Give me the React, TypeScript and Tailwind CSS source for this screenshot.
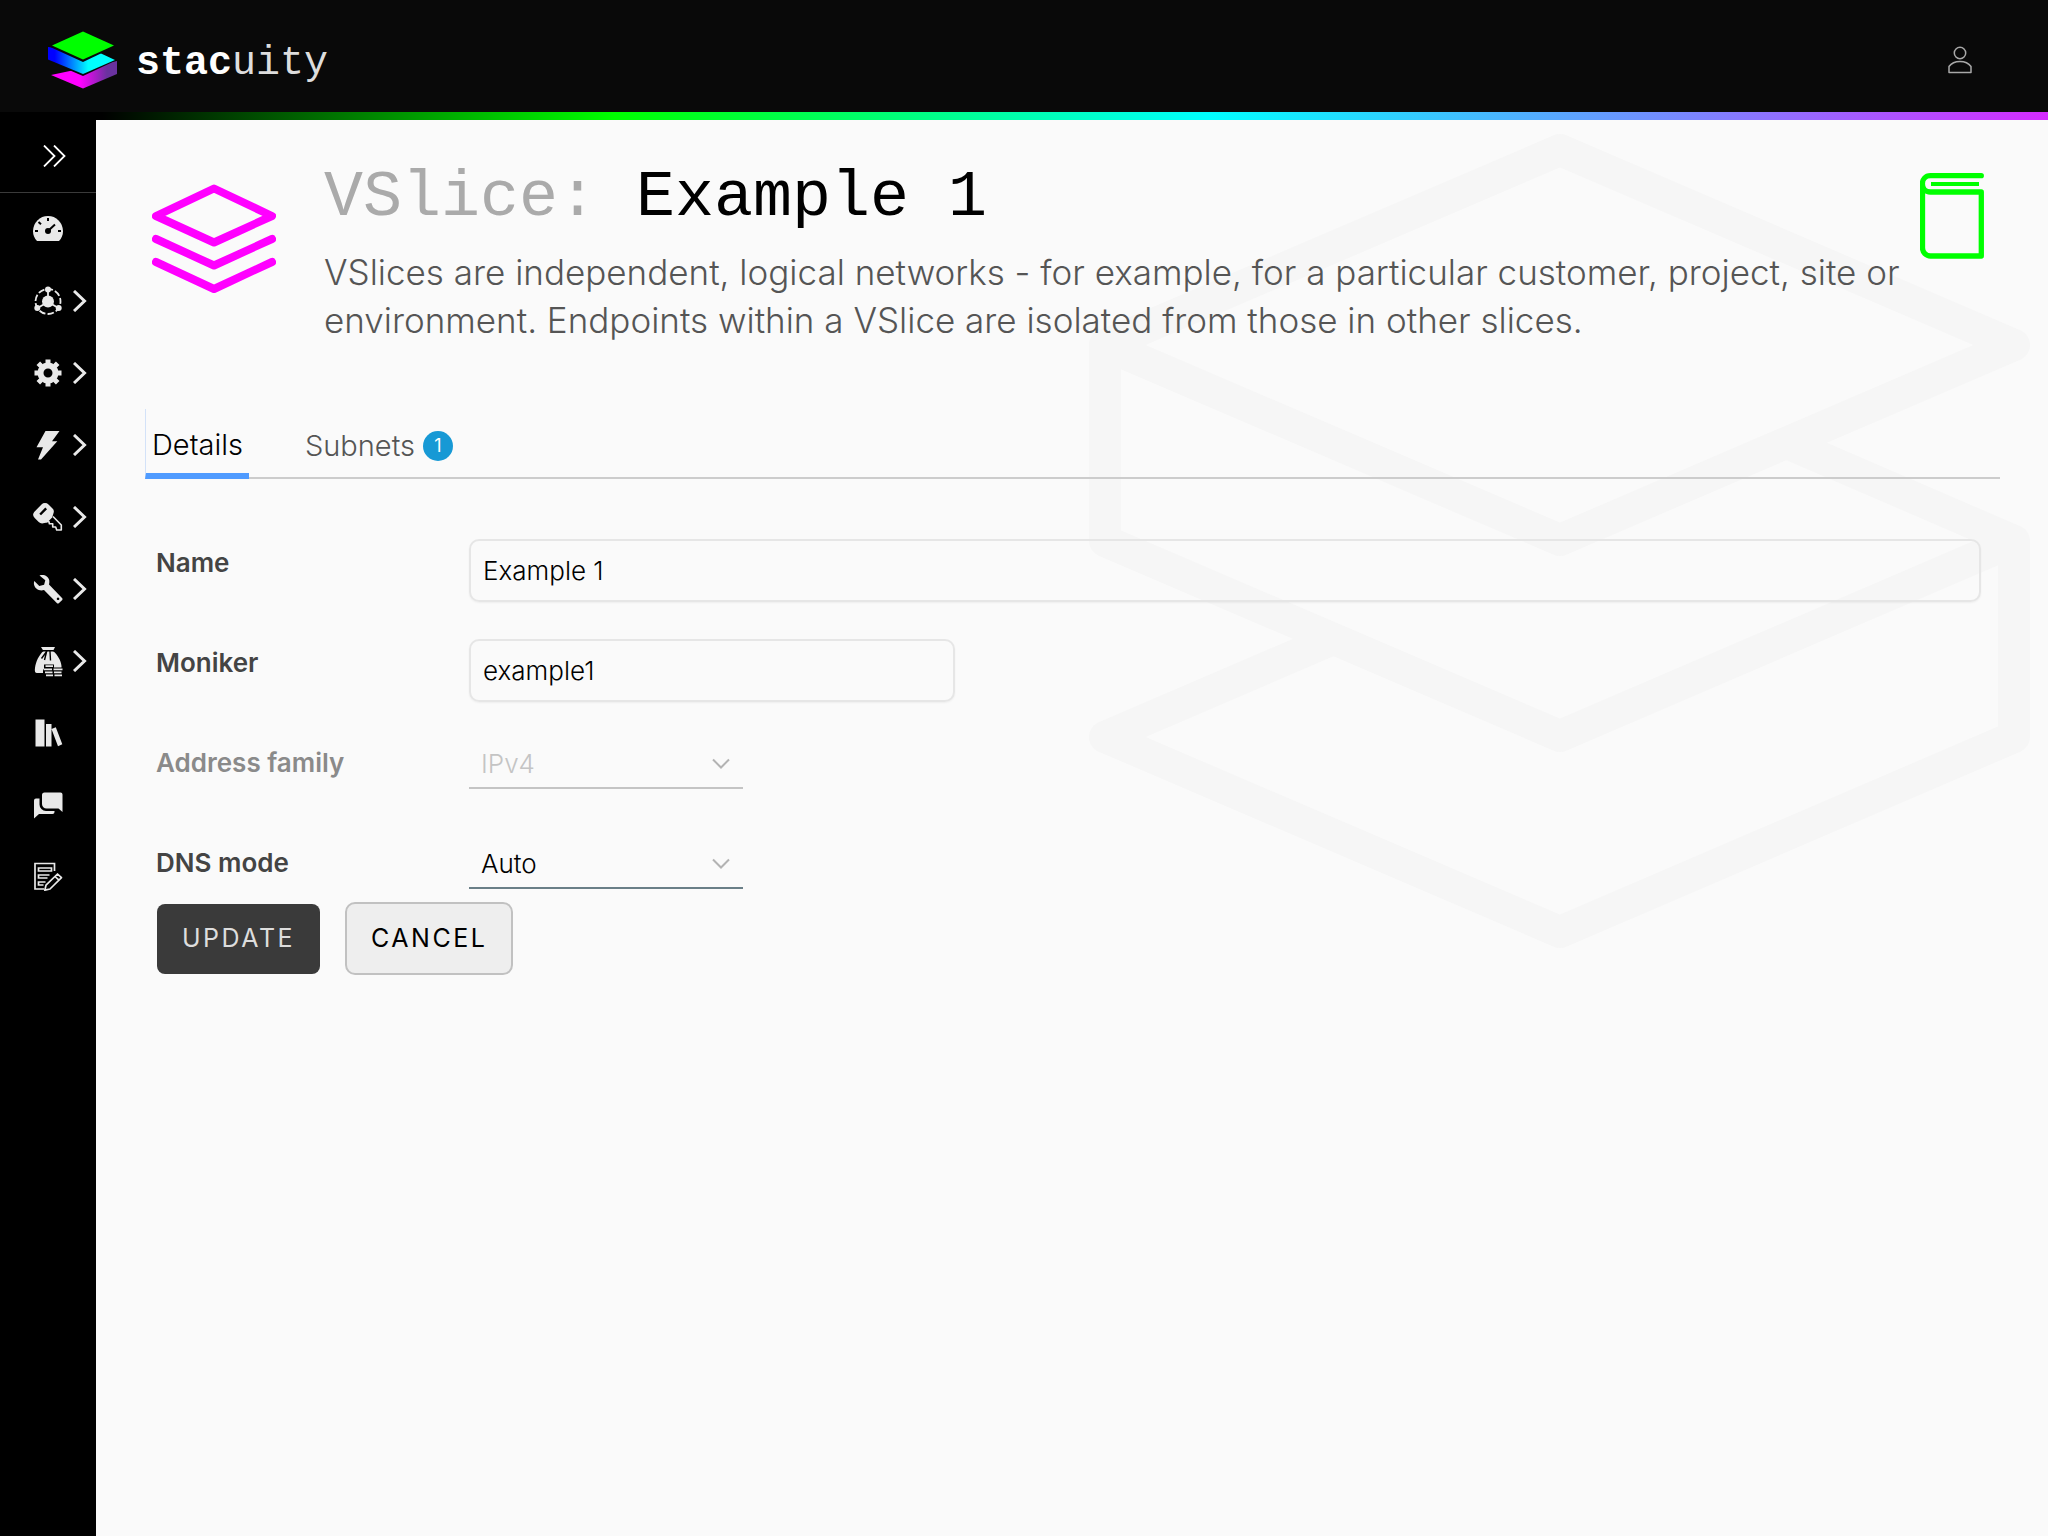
import type { ReactNode } from "react";

interface NavItem {
    label: string,
    hasChildren: boolean,
    icon: ReactNode,
}

interface FieldRowProps {
    id: string,
    label: string,
    muted?: boolean,
    children: ReactNode,
}

const navItems: NavItem[] = [
    {
        label: "Dashboard",
        hasChildren: false,
        icon: (
            <>
                <path fill="#e9e9e9" d="M5 28C2.500 25.500 1 22 1 18.300A15 15.300 0 0 1 31 18.300C31 22 29.500 25.500 27 28Z" />
                <path stroke="#000" strokeWidth="2" d="M16 5v3M3 18h3M26 18h3M6.500 9l2.500 2.300M16.500 17.500 23 11.500" />
                <circle cx="16" cy="18" r="3" fill="#000" />
            </>
        ),
    },
    {
        label: "Network",
        hasChildren: true,
        icon: (
            <>
                <circle cx="16" cy="16.500" r="12.500" fill="none" stroke="#e9e9e9" strokeWidth="1.800" strokeDasharray="6.500 2.225" strokeDashoffset="4" />
                <path stroke="#e9e9e9" strokeWidth="1.800" d="M16 5v12L5.500 23M16 17l10.500 6" />
                <circle cx="16" cy="16.500" r="6" fill="#e9e9e9" />
                <circle cx="16" cy="4.500" r="3" fill="#e9e9e9" />
                <circle cx="5.300" cy="23" r="3" fill="#e9e9e9" />
                <circle cx="26.700" cy="23" r="3" fill="#e9e9e9" />
            </>
        ),
    },
    {
        label: "Settings",
        hasChildren: true,
        icon: (
            <>
                <circle cx="16" cy="16" r="7.500" fill="none" stroke="#e9e9e9" strokeWidth="6" />
                <path stroke="#e9e9e9" strokeWidth="5" d="M16 2.500v4M16 25.500v4M2.500 16h4M25.500 16h4M6.300 6.300l3 3M22.700 22.700l3 3M6.300 25.700l3-3M22.700 9.300l3-3" />
            </>
        ),
    },
    {
        label: "Events",
        hasChildren: true,
        icon: <path fill="#e9e9e9" d="M13.500 2H27.500L20 12.300H25.300L9 30.500H6L11 18.300H4.500Z" />,
    },
    {
        label: "Access",
        hasChildren: true,
        icon: (
            <>
                <path fill="#e9e9e9" fillRule="evenodd" d="M9.500 3.500a5 5 0 0 1 7 0l4 4a4 4 0 0 1 1.200 4l-1.500 5-5 5-4 .800a5 5 0 0 1-4.500-1.300l-4-4a4.500 4.500 0 0 1-.500-6ZM7.300 12.700l1.700 1.500 6-6-1.700-1.700Z" />
                <path fill="none" stroke="#e9e9e9" strokeWidth="1.600" strokeLinejoin="round" d="M21 15.500 29.300 24v5h-4.600l-1-3h-3v-3.300h-3.300l-.500-2.200h-3" />
            </>
        ),
    },
    {
        label: "Tools",
        hasChildren: true,
        icon: (
            <path fill="#e9e9e9" fillRule="evenodd" d="M7.500 2.500c4-1.500 9 .5 9.800 5 .2 1.500 0 2.800-.3 4L30 25c.7.700.7 1.500 0 2.200L27 30c-.700.700-1.500.700-2.200 0L12 17c-4.500 1.300-9-.800-10-5.500-.200-1.500 0-2.500.300-3.500l5 5 4.800-1.200 1.200-4.500ZM26 24.500a1.300 1.300 0 1 0 .1 0Z" />
        ),
    },
    {
        label: "Billing",
        hasChildren: true,
        icon: (
            <>
                <path fill="#e9e9e9" d="M9 2h14l-2 4c5 4 8 10 8.500 15v7H5c-2 0-2.500-2-2-5 .800-6.500 4-13 8.500-17Z" />
                <path fill="none" stroke="#000" strokeWidth="1.400" d="M10 5.700h13M15 6l-5.500 7.500M14.500 7l-2 8M18 6.500l.500 9" />
                <path fill="#000" d="M12 19.500h10v3h9V31H11v-7h1Z" />
                <path stroke="#e9e9e9" strokeWidth="1.800" d="M13.500 21.200h7.500M11.500 24.300h8.500M21.500 24.300h9M13 27.300h7.500M22 27.300h7.500M14 30.300h7M22.500 30.300h7.500" />
            </>
        ),
    },
    {
        label: "Library",
        hasChildren: false,
        icon: (
            <>
                <path fill="#e9e9e9" d="M3.500 2.500h9v27h-9ZM14 7h5.500v22.500H14ZM19.500 12l4.300-1.700 6.500 17-4.300 2Z" />
            </>
        ),
    },
    {
        label: "Support",
        hasChildren: false,
        icon: (
            <>
                <path fill="#e9e9e9" d="M12.500 3.500h16a2 2 0 0 1 2 2V23l-4-3.500h-12a4.500 4.500 0 0 1-4.500-4.500V6a2.500 2.500 0 0 1 2.500-2.500Z" />
                <path fill="#e9e9e9" d="M7.500 9.500v6a6.500 6.500 0 0 0 6.500 6.500h8.500v1a2 2 0 0 1-2 2H7l-5 4.500V11.500a2 2 0 0 1 2-2Z" />
            </>
        ),
    },
    {
        label: "Notes",
        hasChildren: false,
        icon: (
            <>
                <path fill="none" stroke="#e9e9e9" strokeWidth="1.700" d="M22.500 10V2.500H3v25.500h9M6.500 7h13v3h-13ZM17.500 14h-11v3h9M13.500 21h-7v3h5" />
                <path fill="#000" stroke="#e9e9e9" strokeWidth="1.700" strokeLinejoin="round" d="m12.800 29.200 1.200-5L25.500 13l4 3.700L18 28ZM23 15.500l4 3.700" />
            </>
        ),
    },
];

function FieldRow({ id, label, muted, children }: FieldRowProps) {
    return (
        <div className="flex h-25 items-start">
            <label
                htmlFor={id}
                className={`w-[313px] shrink-0 pt-2 text-[26px] leading-8 font-semibold ${muted ? "text-[#8a8a8a]" : "text-[#444]"}`}
            >
                {label}
            </label>
            {children}
        </div>
    )
}

function SelectField({ id, value, disabled }: { id: string, value: string, disabled?: boolean }) {
    return (
        <div className="relative w-[274px]">
            <select
                id={id}
                disabled={disabled}
                className="h-[50px] w-full appearance-none border-b-2 border-[#6a7f87] bg-transparent px-3 text-[26px] text-black disabled:border-[#c4c4c4] disabled:text-[#c4c4c4] disabled:opacity-100"
            >
                <option>{value}</option>
            </select>
            <svg viewBox="0 0 18 12" className="pointer-events-none absolute top-[19px] right-[13px] h-3 w-[18px]" fill="none" stroke="#b3b3b3" strokeWidth="2">
                <path d="m1 1.500 8 8 8-8" />
            </svg>
        </div>
    )
}

function Header() {
    return (
        <header className="bg-[#090909]">
            <div className="flex h-28 items-center justify-between pt-2 pr-[76px] pl-12">
                <a href="#" className="flex items-center text-[40px] text-white" aria-label="stacuity">
                    <svg viewBox="0 0 70 60" className="mr-[18px] h-[60px] w-[70px]">
                        <defs>
                            <linearGradient id="mid" x1="0" x2="1">
                                <stop offset="0.1" stopColor="#00f" />
                                <stop offset="0.6" stopColor="#0ff" />
                            </linearGradient>
                            <linearGradient id="low" x1="0" x2="1">
                                <stop offset="0.45" stopColor="#f0f" />
                                <stop offset="0.85" stopColor="#6a329f" />
                            </linearGradient>
                        </defs>
                        <path fill="url(#low)" d="M3 45 69 31v13L35 58.500Z" />
                        <path fill="#090909" d="M0 31 35 46 69 30 60 26 0 20Z" />
                        <path fill="url(#mid)" d="M0 17v12.500L35 44 67 30 52 23Z" />
                        <path fill="#090909" d="M0 16 35 32 56 22 35 3Z" />
                        <path fill="#0f0" d="M35 1.500 66 15.500 35 29.500 4 15.500Z" />
                    </svg>
                    <span className="pt-2 font-['Liberation_Mono',monospace]"><b className="font-bold">stac</b><span className="text-[#ddd]">uity</span></span>
                </a>
                <button aria-label="Account">
                    <svg viewBox="0 0 24 28" className="h-7 w-6" fill="none" stroke="#a8a8a8" strokeWidth="1.500">
                        <circle cx="12" cy="7" r="5.700" />
                        <path strokeLinejoin="round" d="M1 26.500v-6C3.500 17 8 15.500 12 15.500s8.500 1.500 11 5v6Z" />
                    </svg>
                </button>
            </div>
            <div className="h-2 bg-[linear-gradient(90deg,#000_5%,#0f0_30%,#0ff_59%,#d52bff_100%)]" />
        </header>
    )
}

function Sidebar() {
    return (
        <nav className="w-24 shrink-0 bg-black">
            <button className="flex h-[73px] w-full items-center border-b border-[#3a3a3a] pl-[43px]" aria-label="Expand menu">
                <svg viewBox="0 0 24 22" className="h-[22px] w-6" fill="none" stroke="#fff" strokeWidth="1.800">
                    <path d="m1 .5 10.500 10.500L1 21.500M11 .5 21.500 11 11 21.500" />
                </svg>
            </button>
            {navItems.map((item) => (
                <a key={item.label} href="#" aria-label={item.label} className="flex h-18 items-center pl-8">
                    <svg viewBox="0 0 32 32" className="h-8 w-8">{item.icon}</svg>
                    {item.hasChildren && (
                        <svg viewBox="0 0 14 22" className="ml-[9px] h-[22px] w-3.5" fill="none" stroke="#e9e9e9" strokeWidth="3">
                            <path d="m1 1 10.500 10L1 21" />
                        </svg>
                    )}
                </a>
            ))}
        </nav>
    )
}

export default function App() {
    return (
        <div className="flex min-h-screen flex-col bg-[#fafafa] font-['Inter',sans-serif] font-light text-black">
            <Header />
            <div className="flex grow">
                <Sidebar />
                <main className="relative min-w-0 grow pr-12 pl-[49px]">
                    {/* faint stack behind the page */}
                    <svg viewBox="1089 133 941 816" className="pointer-events-none absolute top-[13px] right-[18px] w-[941px]" fill="none" stroke="#f6f6f6" strokeWidth="32" strokeLinejoin="round" strokeLinecap="round">
                        <path d="M1560 150 2014 345 1560 540 1105 345ZM1105 345V541L1560 736 2014 541 1787 443M2014 541V737L1560 932 1105 737 1333 639" />
                    </svg>

                    <div className="relative">
                        <div className="flex items-start pt-10">
                            <svg viewBox="0 0 124 110" className="mt-6 ml-[7px] h-[110px] w-31 shrink-0" fill="none" stroke="#f0f" strokeWidth="8" strokeLinejoin="round" strokeLinecap="round">
                                <path d="M62 4.500 120 32 62 58.500 4 32ZM4 55 62 81.500 120 55M4 78 62 105 120 78" />
                            </svg>
                            <div className="ml-12 min-w-0 grow">
                                <h1 className="font-['Liberation_Mono',monospace] text-[65px] leading-19">
                                    <span className="text-[#aaa]">VSlice:</span> Example 1
                                </h1>
                                <p className="mt-3 text-[35px] leading-12 text-[#555]">
                                    VSlices are independent, logical networks - for example, for a particular customer, project, site or environment. Endpoints within a VSlice are isolated from those in other slices.
                                </p>
                            </div>
                            <button className="mt-[13px] mr-4 ml-2 shrink-0" aria-label="Documentation">
                                <svg viewBox="0 0 64 86" className="h-[86px] w-16" fill="none" stroke="#0f0" strokeWidth="5.300">
                                    <path strokeLinejoin="round" strokeLinecap="round" d="M61.300 2.700H10.500C-.3 2.700-.3 19 10.500 19h50.800v64H10.500a8 8 0 0 1-8-8V11" />
                                    <path strokeWidth="4" d="M11 11h48" />
                                </svg>
                            </button>
                        </div>

                        <div className="mt-[65px] flex h-[70px] border-b-2 border-[#ccc] text-[29px]" role="tablist">
                            <button role="tab" aria-selected="true" className="-mb-0.5 border-b-6 border-l border-b-[#4f9bff] border-l-[#d3e2f8] px-1.5 pt-2">Details</button>
                            <button role="tab" aria-selected="false" className="ml-14 flex items-center gap-2 pt-1.5 text-[#555]">
                                Subnets
                                <span className="flex size-[30px] items-center justify-center rounded-full bg-[#1799d5] text-lg font-normal text-white">1</span>
                            </button>
                        </div>

                        <form className="pt-[60px] pr-[19px] pl-[11px]">
                            <FieldRow id="name" label="Name">
                                <input id="name" defaultValue="Example 1" className="h-[63px] grow rounded-[10px] border-2 border-[#e6e6e6] px-3 text-[26px] shadow-xs" />
                            </FieldRow>
                            <FieldRow id="moniker" label="Moniker">
                                <input id="moniker" defaultValue="example1" className="h-[63px] w-[486px] rounded-[10px] border-2 border-[#e6e6e6] px-3 text-[26px] shadow-xs" />
                            </FieldRow>
                            <FieldRow id="family" label="Address family" muted>
                                <SelectField id="family" value="IPv4" disabled />
                            </FieldRow>
                            <FieldRow id="dns" label="DNS mode">
                                <SelectField id="dns" value="Auto" />
                            </FieldRow>
                        </form>
                        <div className="-mt-[37px] flex items-center gap-[25px] px-3">
                            <button className="h-[70px] rounded-lg bg-[#3a3a3a] px-[25px] text-[25px] font-normal tracking-widest text-[#ddd]">UPDATE</button>
                            <button className="h-[73px] rounded-[10px] border-2 border-[#c1c1c1] bg-[#eee] px-6 text-[25px] font-normal tracking-widest">CANCEL</button>
                        </div>
                    </div>
                </main>
            </div>
        </div>
    )
}
